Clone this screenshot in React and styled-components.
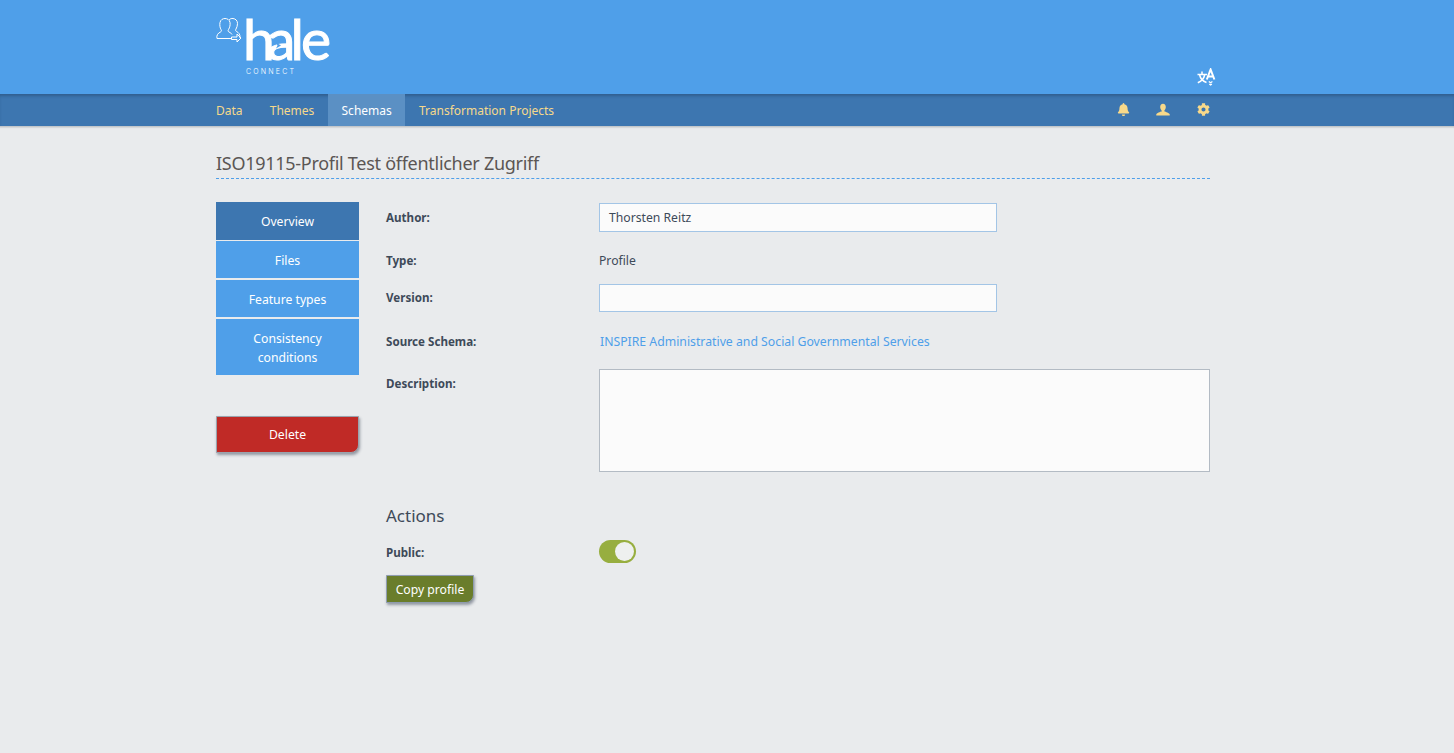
import React from "react";
import styled, { createGlobalStyle } from "styled-components";
import { FaBell, FaCog } from "react-icons/fa";

const Global = createGlobalStyle`
  html, body { margin: 0; padding: 0; background: #e9ebed; }
  body { font-family: "Noto Sans", "Liberation Sans", sans-serif; font-size: 12.2px; color: #3e4a59; }
  * { box-sizing: border-box; }
`;

const Page = styled.div`min-height: 753px; background: #e9ebed;`;
const Wrap = styled.div`width: 994px; margin-left: 216px;`;

const Header = styled.header`height: 94px; background: #4f9fe9;`;
const HeaderInner = styled(Wrap)`position: relative; height: 94px;`;
const LogoSvg = styled.svg`display: block; width: 120px; height: 80px;`;
const LangButton = styled.span`position: absolute; right: -7px; top: 68px; width: 20px; height: 20px; display: block;`;

const Nav = styled.nav`height: 33px; background: #3d76b0; box-shadow: inset 0 3px 3px -1px rgba(30,60,95,.4), 0 1px 1px rgba(0,0,0,.08); border-bottom: 1px solid #c3c7cb;`;
const NavInner = styled(Wrap)`display: flex; height: 32px; align-items: stretch; justify-content: space-between;`;
const NavLinks = styled.div`display: flex; margin-left: -13.6px;`;
const NavLink = styled.a`
  display: flex; align-items: center; padding: 1px 13.6px 0; color: ${p => p.$active ? "#fff" : "#f6d98b"};
  background: ${p => p.$active ? "#5b90c4" : "transparent"}; font-size: 12px;
`;
const NavIcons = styled.div`display: flex; align-items: center; gap: 26px; color: #f8d98a; margin-top: -1px;`;
const NavIcon = styled.span`display: flex; width: 14px; justify-content: center; font-size: 13px;`;

const Main = styled(Wrap)`padding-top: 24px;`;
const Title = styled.h1`
  margin: 0 0 23px; height: 28px; font-weight: 400; font-size: 18px; line-height: 24px; letter-spacing: -0.28px; color: #5b5654;
  border-bottom: 1px dashed #4f9fe9;
`;
const Columns = styled.div`display: grid; grid-template-columns: 143px 1fr; column-gap: 27px;`;

const Side = styled.aside`display: flex; flex-direction: column;`;
const SideItem = styled.a`
  display: flex; align-items: center; justify-content: center; text-align: center;
  height: ${p => p.$h}px; margin-bottom: ${p => p.$gap ?? 2}px; padding: ${p => p.$pt ?? 0}px 10px 0; line-height: 19px;
  color: #fff; background: ${p => p.$active ? "#3d76b0" : "#4f9fe9"}; font-size: 12.2px;
`;
const Delete = styled.button`
  margin-top: 41px; height: 37px; width: 143px; border: 1px solid #9aa3ad; border-radius: 0 0 8px 0;
  background: #c02a26; color: #fff; font: inherit; box-shadow: 1px 2px 3px rgba(40,50,70,.45); padding: 0;
`;

const Form = styled.div`display: flex; flex-direction: column;`;
const Row = styled.div`display: grid; grid-template-columns: 213px 1fr; align-items: ${p => p.$top ? "start" : "center"}; min-height: ${p => p.$h}px; margin-top: ${p => p.$mt ?? 0}px;`;
const Label = styled.label`font-weight: 700; font-size: 11.6px; color: #3e4a59; padding-top: ${p => p.$pt ?? 0}px; padding-bottom: ${p => p.$pb ?? 0}px;`;
const Value = styled.span`font-size: 12.2px; padding-top: ${p => p.$pt ?? 0}px;`;
const Input = styled.div`
  width: 398px; height: ${p => p.$h}px; border: 1px solid #a3c5e6; background: #fbfbfb; padding: 0 9px;
  display: flex; align-items: center; font-size: 12.2px;
`;
const LinkText = styled.a`color: #4f9fe9; padding: 2px 0 0 1px; font-size: 12.25px;`;
const TextArea = styled.div`height: 103px; border: 1px solid #b3bbc4; background: #fbfbfb;`;
const H2 = styled.h2`margin: 31px 0 0; font-weight: 400; font-size: 17px; line-height: 26px; color: #3e4a59;`;
const Toggle = styled.span`
  display: block; position: relative; width: 37px; height: 23px; border-radius: 12px; background: #97ae3f;
`;
const Knob = styled.span`position: absolute; right: 2px; top: 2px; width: 19px; height: 19px; border-radius: 50%; background: #eef0ef;`;
const Copy = styled.button`
  align-self: flex-start; margin-top: 12px; height: 28px; width: 88px; border: 1px solid #8f9cb0; border-radius: 0 0 8px 0;
  background: #6a7d2b; color: #fff; font: inherit; box-shadow: 1px 2px 3px rgba(40,50,70,.45); padding: 0;
`;

const Logo = () => (
  <LogoSvg viewBox="0 0 120 80" aria-label="hale connect">
    <g fill="none" stroke="#fff" strokeWidth="1" transform="translate(0 14)">
      <path d="M1 24.500c-.8-3 1-5.500 3.500-6.500 1-.5 1.200-1.500.5-2.500C4 14 3.500 11 4 8.500 4.600 5.500 7 4.500 9 4.500s4.500 1 5 4c.4 2.500-.2 5-1.500 7-.7 1-.5 2 .5 2.500 1.500.7 2.500 1.500 3 2.500" />
      <path d="M1 24.500h14" />
      <path d="M13 6c1-1.200 2.500-1.700 4-1.500 2.500.3 4.500 2 4.500 5 0 2-.6 4-1.500 5.500-.6 1-.5 2 .5 2.500 2 1 3.800 2.600 3.500 6.500" />
      <path d="M15.500 23h5.500v-3l4 4-4 4v-2.500h-5.500z" />
    </g>
    <text x="27 51 74.500 85" y="59.500" fontFamily="Lato, sans-serif" fontWeight="400" fontSize="57" stroke="#fff" strokeWidth="1" fill="#fff">hale</text>
    <path d="M60 42.500l5 3-5 3 1.500-3z" fill="#4f9fe9" />
    <text x="30" y="74" fontFamily="Inter, sans-serif" fontWeight="300" fontSize="7" fill="#fff" letterSpacing="2.200">CONNECT</text>
  </LogoSvg>
);

const Translate = () => (
  <svg viewBox="0 0 20 20" width="20" height="20" fill="none" stroke="#fff" strokeWidth="1.500" aria-hidden="true">
    <path d="M.5 6.500h9.500M5 3.500v3M2.500 6.500c.8 3.800 3.500 6.800 7 8M7.800 6.500C7 10.300 4.500 13.300.8 14.800" />
    <path d="M9.800 11.500L13.600 1.500l3.800 10M11 8.500h5.200" strokeWidth="2" />
    <path d="M11.800 13.500l1.800 1.200 1.800-1.200M12.300 16l1.300 1 1.300-1" strokeWidth="1.200" />
  </svg>
);

const UserIcon = () => (
  <svg viewBox="0 0 15 13" width="15" height="13" fill="currentColor" aria-hidden="true">
    <path d="M7.500.3c2 0 3 1.500 3 3.500 0 1.500-.7 3-1.500 3.700v1c0 .5 4 1 5.700 3v1.300H.3v-1.300C2 9.500 6 9 6 8.500v-1C5.200 6.800 4.500 5.300 4.500 3.800 4.500 1.800 5.500.3 7.500.3z" />
  </svg>
);

export default function App() {
  return (
    <Page>
      <Global />
      <Header>
        <HeaderInner>
          <Logo />
          <LangButton><Translate /></LangButton>
        </HeaderInner>
      </Header>
      <Nav>
        <NavInner>
          <NavLinks>
            <NavLink>Data</NavLink>
            <NavLink>Themes</NavLink>
            <NavLink $active>Schemas</NavLink>
            <NavLink>Transformation Projects</NavLink>
          </NavLinks>
          <NavIcons>
            <NavIcon><FaBell /></NavIcon>
            <NavIcon><UserIcon /></NavIcon>
            <NavIcon><FaCog /></NavIcon>
          </NavIcons>
        </NavInner>
      </Nav>
      <Main>
        <Title>ISO19115-Profil Test öffentlicher Zugriff</Title>
        <Columns>
          <Side>
            <SideItem $active $h={38} $gap={1}>Overview</SideItem>
            <SideItem $h={37} $pt={2}>Files</SideItem>
            <SideItem $h={37} $pt={2}>Feature types</SideItem>
            <SideItem $h={56} $gap={0} $pt={2}>Consistency<br />conditions</SideItem>
            <Delete>Delete</Delete>
          </Side>
          <Form>
            <Row $h={29} $mt={1}><Label>Author:</Label><Input $h={29}>Thorsten Reitz</Input></Row>
            <Row $h={52}><Label $pt={4}>Type:</Label><Value $pt={4}>Profile</Value></Row>
            <Row $h={28}><Label $pb={1}>Version:</Label><Input $h={28} /></Row>
            <Row $h={57}><Label $pt={2}>Source Schema:</Label><LinkText>INSPIRE Administrative and Social Governmental Services</LinkText></Row>
            <Row $h={103} $top><Label $pt={7}>Description:</Label><TextArea /></Row>
            <H2>Actions</H2>
            <Row $h={23} $mt={11}><Label $pt={2}>Public:</Label><Toggle><Knob /></Toggle></Row>
            <Copy>Copy profile</Copy>
          </Form>
        </Columns>
      </Main>
    </Page>
  );
}
